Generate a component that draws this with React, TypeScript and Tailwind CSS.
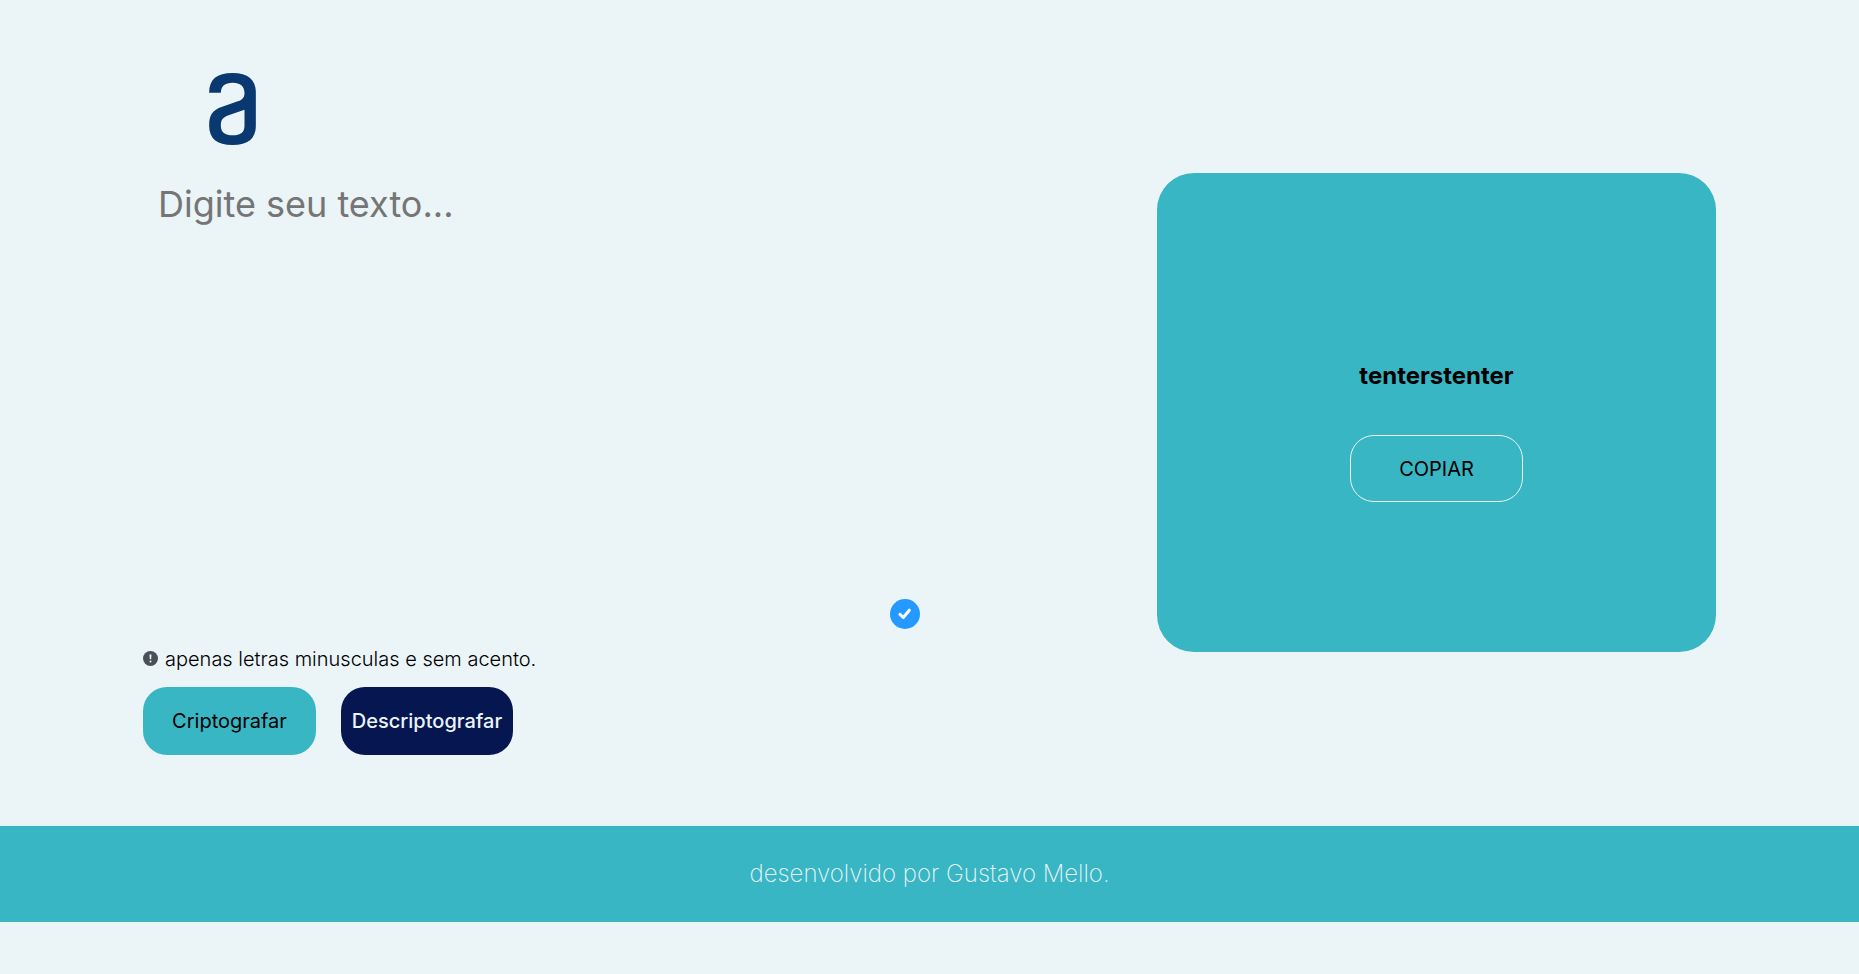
import { useState } from "react";

function Logo() {
  return (
    <svg viewBox="57 39 140 216" className="h-[72px] w-[47px]" role="img" aria-label="Logo">
      <path
        fill="#0a3871"
        fillRule="evenodd"
        d="M57 98C57 58 80 39 127 39C174 39 197 60 197 97V197C197 235 174 255 127 255C80 255 57 235 57 197C57 165 66 150 96 140L143 124C158 118 163 112 163 98C163 78 150 68 128 68C104 68 92 78 92 98ZM163 149L115 166C98 172 92 180 92 197C92 217 104 226 128 226C151 226 163 217 163 197Z"
      />
    </svg>
  );
}

function InfoIcon() {
  return (
    <svg viewBox="0 0 16 16" className="size-4" aria-hidden="true">
      <circle cx="7.5" cy="7.5" r="7.5" fill="#495057" />
      <path d="M6.500 3.500h2l-.3 4.700H6.800z" fill="#ebf4f7" />
      <circle cx="7.5" cy="10.400" r="1" fill="#ebf4f7" />
    </svg>
  );
}

function CheckBadge() {
  return (
    <svg viewBox="0 0 30 30" className="absolute right-[9px] bottom-2 size-[30px]" aria-hidden="true">
      <circle cx="15" cy="15" r="15" fill="#2499ff" />
      <path d="M10 15.300L13.300 18.500L19.300 11.200" fill="none" stroke="#fff" strokeWidth="3" strokeLinecap="round" strokeLinejoin="round" />
    </svg>
  );
}

export default function App() {
  const [text, setText] = useState("");

  return (
    <div className="flex min-h-screen flex-col bg-[#ebf4f7] font-['Inter',sans-serif] text-black">
      <main className="flex gap-[228px] px-[143px]">
        <section className="flex flex-1 flex-col pb-[71px]">
          <header className="h-[173px] px-[66px] pt-[73px]">
            <Logo />
          </header>
          <div className="relative">
            <textarea
              aria-label="Texto"
              placeholder="Digite seu texto..."
              value={text}
              onChange={(e) => setText(e.target.value)}
              className="block h-[464px] w-full resize-none bg-transparent p-[15px] text-[36px] leading-8 outline-none placeholder:text-[#757575]"
            />
            <CheckBadge />
          </div>
          <p className="flex h-[50px] items-start gap-[6px] pt-[10px] text-[20px] leading-6 font-light">
            <span className="pt-1">
              <InfoIcon />
            </span>
            apenas letras minusculas e sem acento.
          </p>
          <div className="flex gap-[25px]">
            <button type="button" className="h-[68px] w-[173px] rounded-3xl bg-[#38b6c4] text-[20px]">
              Criptografar
            </button>
            <button type="button" className="h-[68px] w-[172px] rounded-3xl bg-[#051650] text-[20px] font-medium text-[#ebf4f7]">
              Descriptografar
            </button>
          </div>
        </section>
        <aside className="mt-[173px] flex h-[479px] w-[559px] flex-col items-center gap-[43px] rounded-[37px] bg-[#38b6c4] pt-[187px]">
          <p className="text-2xl font-bold">tenterstenter</p>
          <button type="button" className="h-[67px] w-[173px] rounded-3xl border border-[#ebf4f7] text-[20px]">
            COPIAR
          </button>
        </aside>
      </main>
      <footer className="flex h-24 items-center justify-center bg-[#38b6c4] text-2xl font-extralight text-[#ebf4f7]">
        <p>desenvolvido por Gustavo Mello.</p>
      </footer>
    </div>
  );
}
